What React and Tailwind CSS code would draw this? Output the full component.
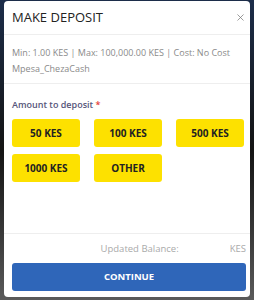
import { X } from 'lucide-react';

const AMOUNTS = ['50 KES', '100 KES', '500 KES', '1000 KES', 'OTHER'];

export default function App() {
  return (
    <div
      className="w-[254px] h-[300px] overflow-hidden bg-gradient-to-b from-[#1c2d4a] via-[#141414] to-[#5a5a5a] pl-[4px] pr-[4px] pt-[1px]"
      style={{ fontFamily: '"Open Sans", "Noto Sans", sans-serif' }}
    >
      <div className="bg-white rounded-[4px] h-[296px] flex flex-col">
        {/* header */}
        <div className="flex items-center justify-between h-[34px] pl-[8px] pr-[4px] border-b border-[#eeeeee]">
          <h2 className="text-[13px] text-[#222] leading-none">MAKE DEPOSIT</h2>
          <X size={11} strokeWidth={1.6} className="text-[#777]" />
        </div>

        {/* limits */}
        <div className="px-[8px] pt-[10px] pb-[6px] border-b border-[#eeeeee] text-[9px] leading-[16px] text-[#8a8a8a]">
          <p>Min: 1.00 KES | Max: 100,000.00 KES | Cost: No Cost</p>
          <p>Mpesa_ChezaCash</p>
        </div>

        {/* amounts */}
        <div className="flex-1 pl-[8px] pr-[6px] pt-[16px]">
          <p className="text-[9px] font-semibold text-[#56557a] leading-none mb-[10px]">
            Amount to deposit <span className="text-[#e53935]">*</span>
          </p>
          <div className="grid grid-cols-3 gap-x-[14px] gap-y-[7px]">
            {AMOUNTS.map((a) => (
              <button
                key={a}
                className="h-[28px] rounded-[3px] bg-[#fde100] text-[10px] font-bold text-[#222]"
              >
                {a}
              </button>
            ))}
          </div>
        </div>

        {/* footer */}
        <div className="border-t border-[#eeeeee] pl-[8px] pr-[4px] pb-[6px]">
          <div className="flex justify-end h-[28px] pt-[2px] items-center text-[9.5px] text-[#aaaaaa]">
            <span>Updated Balance:</span>
            <span className="ml-[51px]">KES</span>
          </div>
          <button className="w-full h-[28px] rounded-[3px] bg-[#2f66b9] text-white text-[9.5px] font-bold">
            CONTINUE
          </button>
        </div>
      </div>
    </div>
  );
}
